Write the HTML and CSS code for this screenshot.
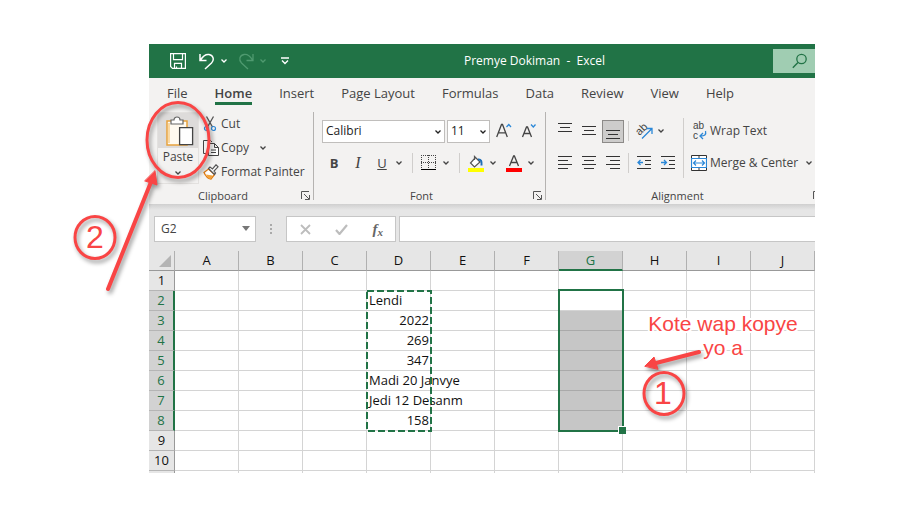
FILE: index.html
```html
<!DOCTYPE html>
<html lang="ht">
<head>
<meta charset="utf-8">
<title>Premye Dokiman - Excel</title>
<link rel="stylesheet" href="styles.css">
</head>
<body>
<svg class="sprite" aria-hidden="true">
  <symbol id="chev" viewBox="0 0 8 6"><path d="M1.500 1.500 4 4 6.500 1.500" fill="none" stroke="currentColor" stroke-width="1.300"/></symbol>
  <symbol id="launch" viewBox="0 0 9 9"><path d="M.5 8V.5H8M3 3l5 5M8.500 4v4.500H4" fill="none" stroke="#555"/></symbol>
</svg>
<main class="app">
  <header class="titlebar">
    <div class="quick">
      <button class="tool save" aria-label="Save"><svg width="16" height="16" viewBox="0 0 16 16"><path d="M.6.6h14.800v14.800H2.500L.6 13.500zM3.500.6v6h9v-6M4.500 15.400v-5h7v5M6.500 15.400v-2" fill="none" stroke="#fff" stroke-width="1.200"/></svg></button>
      <button class="tool undo" aria-label="Undo"><svg width="16" height="17" viewBox="0 0 16 17"><path d="M1 1v6.500h6.500M1.500 7C4 3 7 1 10 1.500c4.500.8 5.500 5.500 2.500 8.500L6 16" fill="none" stroke="#fff" stroke-width="1.500"/></svg><svg class="chev"><use href="#chev"/></svg></button>
      <button class="tool redo" aria-label="Redo"><svg width="16" height="17" viewBox="0 0 16 17"><path d="M15 1v6.500H8.500M14.500 7C12 3 9 1 6 1.500 1.500 2.300.5 7 3.500 10L10 16" fill="none" stroke="currentColor" stroke-width="1.300"/></svg><svg class="chev"><use href="#chev"/></svg></button>
      <button class="tool" aria-label="Customize"><svg width="8" height="8" viewBox="0 0 8 8"><path d="M0 1h8M1 3.500l3 3 3-3" fill="none" stroke="#fff" stroke-width="1.400"/></svg></button>
    </div>
    <h1 class="doc-title">Premye Dokiman&nbsp; -&nbsp; Excel</h1>
    <button class="search" aria-label="Search"><svg width="16" height="16" viewBox="0 0 16 16"><circle cx="9.500" cy="6" r="4.700" fill="none" stroke="#217346" stroke-width="1.300"/><path d="M6 9.500.8 14.800" stroke="#217346" stroke-width="1.400"/></svg></button>
  </header>

  <nav class="tabs">
    <button>File</button><button class="active">Home</button><button>Insert</button><button>Page Layout</button><button>Formulas</button><button>Data</button><button>Review</button><button>View</button><button>Help</button>
  </nav>

  <section class="ribbon">
    <div class="group clipboard">
      <div class="group-body">
        <button class="paste">
          <span class="paste-icon"><svg width="29" height="32" viewBox="0 0 29 32"><path d="M2 5h20v24H2z" fill="#fffaf0" stroke="#e8a33d" stroke-width="1.500"/><path d="M4 27V7" stroke="#f9d9a4" stroke-width="2"/><path d="M6 8V4h3c0-4 6-4 6 0h3v4z" fill="#fff" stroke="#666" stroke-width="1.200"/><path d="M14.600 11.600h13v17h-13z" fill="#fff" stroke="#444" stroke-width="1.300"/></svg></span>
          <span>Paste</span>
          <svg class="chev"><use href="#chev"/></svg>
        </button>
        <div class="clip-list">
          <button><svg width="16" height="16" viewBox="0 0 16 16"><path d="M3.500.5 9.500 11M10.500.5 4.500 11" fill="none" stroke="#555" stroke-width="1.300"/><circle cx="3.500" cy="12.500" r="2" fill="none" stroke="#2b88d8" stroke-width="1.200"/><circle cx="10.500" cy="12.500" r="2" fill="none" stroke="#2b88d8" stroke-width="1.200"/></svg>Cut</button>
          <button><svg width="16" height="16" viewBox="0 0 16 16"><path d="M5 13.500H.5V.5h7L9 2" fill="none" stroke="#444"/><path d="M5.500 3.500h6l4 4v8h-10zM11.500 3.500v4h4M8 10h5M8 12.500h5" fill="#fff" stroke="#444"/></svg>Copy<svg class="chev"><use href="#chev"/></svg></button>
          <button><svg width="16" height="16" viewBox="0 0 16 16"><path d="M1 8.500 5.500 5l6 5.500L8 15c-3-.5-5.500-3-7-6.500z" fill="#fff" stroke="#e07a10" stroke-width="1.300"/><path d="M3 10.500l6.500 1L8 15c-2 0-4-2-5-4.500z" fill="#f2a33c"/><path d="M5.500 4.500 7 3l2.500 2L13 .8l2 2L11 7l1.500 2-1 1.500z" fill="#fff" stroke="#555" stroke-width="1.200"/></svg>Format Painter</button>
        </div>
      </div>
      <div class="group-label">Clipboard<button class="launcher" aria-label="Clipboard options"><svg width="9" height="9"><use href="#launch"/></svg></button></div>
    </div>

    <div class="group font">
      <div class="group-body rows">
        <div class="row">
          <label class="combo family"><select aria-label="Font"><option>Calibri</option></select><svg class="chev"><use href="#chev"/></svg></label>
          <label class="combo size"><select aria-label="Font size"><option>11</option></select><svg class="chev"><use href="#chev"/></svg></label>
          <button class="grow" aria-label="Increase font size"><svg width="16" height="16" viewBox="0 0 16 16"><path d="M.7 14 5.500 1.500h1L11.300 14M2.500 9.800h7" fill="none" stroke="#444" stroke-width="1.300"/><path d="M10.500 4l2.300-2.500L15 4" fill="none" stroke="#2b88d8" stroke-width="1.300"/></svg></button>
          <button class="shrink" aria-label="Decrease font size"><svg width="16" height="16" viewBox="0 0 16 16"><path d="M1.500 14 5.500 4h1l4 10M3 10.500h6" fill="none" stroke="#444" stroke-width="1.300"/><path d="M10 1.500 12.300 4l2.200-2.500" fill="none" stroke="#2b88d8" stroke-width="1.300"/></svg></button>
        </div>
        <div class="row">
          <button class="w24"><b>B</b></button>
          <button class="w24"><i class="serif">I</i></button>
          <button class="w24"><u>U</u></button>
          <button class="drop" aria-label="Underline options"><svg class="chev"><use href="#chev"/></svg></button>
          <span class="sep"></span>
          <button class="w24" aria-label="Borders"><svg width="16" height="16" viewBox="0 0 16 16"><path d="M.5 0v14M14.500 0v14M0 .5h15M7.500 0v14M0 7.500h15" stroke="#444" stroke-dasharray="1 1"/><path d="M0 14.500h15" stroke="#000"/></svg></button>
          <button class="drop" aria-label="Border options"><svg class="chev"><use href="#chev"/></svg></button>
          <span class="sep"></span>
          <button class="w24" aria-label="Fill color"><svg width="16" height="17" viewBox="0 0 16 17"><path d="M7.500 2.500 2.500 8l4 4L12 7 6.500 1.500V5" fill="#fff" stroke="#555" stroke-width="1.200"/><path d="M10 4.500c3-.5 4 2 3.500 6" fill="none" stroke="#1f6fb8" stroke-width="2"/><path d="M0 13h16v4H0z" fill="#ff0"/></svg></button>
          <button class="drop" aria-label="Fill color options"><svg class="chev"><use href="#chev"/></svg></button>
          <button class="w24" aria-label="Font color"><svg width="16" height="17" viewBox="0 0 16 17"><path d="M3.500 11 7.600 1h.8l4.100 10M5 7.500h6" fill="none" stroke="#444" stroke-width="1.300"/><path d="M0 13h16v4H0z" fill="red"/></svg></button>
          <button class="drop" aria-label="Font color options"><svg class="chev"><use href="#chev"/></svg></button>
        </div>
      </div>
      <div class="group-label">Font<button class="launcher" aria-label="Font options"><svg width="9" height="9"><use href="#launch"/></svg></button></div>
    </div>

    <div class="group alignment">
      <div class="group-body">
        <div class="rows align-tools">
          <div class="row">
            <button class="w24" aria-label="Top align"><svg width="14" height="16"><path d="M0 .5h14M2 4.500h10M0 8.500h14" stroke="#333"/></svg></button>
            <button class="w24" aria-label="Middle align"><svg width="14" height="16"><path d="M0 3.500h14M2 7.500h10M0 11.500h14" stroke="#333"/></svg></button>
            <button class="w24 pressed" aria-label="Bottom align"><svg width="14" height="16"><path d="M0 7.500h14M2 11.500h10M0 15.500h14" stroke="#333"/></svg></button>
            <span class="sep"></span>
            <button class="w24" aria-label="Orientation"><svg class="loose" width="17" height="17" viewBox="0 0 17 17"><text x="-1" y="10" transform="rotate(-45 5 6)" font-size="11" fill="#444" class="glyph">ab</text><path d="M6 15.500 15.500 6M10.500 5.500H16V11" fill="none" stroke="#2b88d8" stroke-width="1.300"/></svg></button>
            <button class="drop" aria-label="Orientation options"><svg class="chev"><use href="#chev"/></svg></button>
          </div>
          <div class="row">
            <button class="w24" aria-label="Align left"><svg width="14" height="14"><path d="M0 .5h14M0 4.500h10M0 8.500h14M0 12.500h10" stroke="#333"/></svg></button>
            <button class="w24" aria-label="Center"><svg width="14" height="14"><path d="M0 .5h14M2 4.500h10M0 8.500h14M2 12.500h10" stroke="#333"/></svg></button>
            <button class="w24" aria-label="Align right"><svg width="14" height="14"><path d="M0 .5h14M4 4.500h10M0 8.500h14M4 12.500h10" stroke="#333"/></svg></button>
            <span class="sep"></span>
            <button class="w24" aria-label="Decrease indent"><svg width="14" height="14"><path d="M0 .5h14M8 4.500h6M8 8.500h6M0 12.500h14" stroke="#333"/><path d="M6 6.500H1M3.500 4 1 6.500 3.500 9" fill="none" stroke="#2b88d8" stroke-width="1.300"/></svg></button>
            <button class="w24" aria-label="Increase indent"><svg width="14" height="14"><path d="M0 .5h14M8 4.500h6M8 8.500h6M0 12.500h14" stroke="#333"/><path d="M0 6.500h5M3 4l2.500 2.500L3 9" fill="none" stroke="#2b88d8" stroke-width="1.300"/></svg></button>
          </div>
        </div>
        <div class="rows wrap-tools">
          <button class="row"><svg class="loose" width="16" height="17" viewBox="0 0 16 17"><text x="2" y="6" font-size="10" fill="#444" class="glyph">ab</text><text x="2" y="16" font-size="10" fill="#444" class="glyph">c</text><path d="M14.500 8c1 4-1 5-5 5M12 10l-3 3 3 3" fill="none" stroke="#2b88d8" stroke-width="1.300"/></svg>Wrap Text</button>
          <button class="row"><svg width="16" height="16" viewBox="0 0 16 16"><path d="M.5.5h15v15H.5zM8 0v4M8 12v4" fill="#fff" stroke="#333"/><path d="M.5 3.500h15v9H.5zM3 8h10M5 5.500 2.500 8 5 10.500M11 5.500 13.500 8 11 10.500" fill="#fff" stroke="#2b88d8" stroke-width="1.200"/></svg>Merge &amp; Center<svg class="chev"><use href="#chev"/></svg></button>
        </div>
      </div>
      <div class="group-label">Alignment<button class="launcher" aria-label="Alignment options"><svg width="9" height="9"><use href="#launch"/></svg></button></div>
    </div>
  </section>

  <section class="formula-bar">
    <label class="name-box"><select aria-label="Name box"><option>G2</option></select><svg width="8" height="5"><path d="M0 0h8L4 5z" fill="#777"/></svg></label>
    <svg class="dots" width="3" height="11"><path d="M0 0h2v2H0zM0 4h2v2H0zM0 8h2v2H0z" fill="#aaa"/></svg>
    <div class="fx-box">
      <button aria-label="Cancel"><svg width="11" height="11"><path d="M1 1l9 9M10 1l-9 9" stroke="#bdbdbd" stroke-width="1.800"/></svg></button>
      <button aria-label="Enter"><svg width="13" height="11"><path d="M1 6l3.500 4L12 1" fill="none" stroke="#bdbdbd" stroke-width="2.200"/></svg></button>
      <button aria-label="Insert function" class="fx">f<small>x</small></button>
    </div>
    <input class="formula" type="text" aria-label="Formula">
  </section>

  <table class="sheet">
    <colgroup><col class="rowhead"><col><col><col><col><col><col><col><col><col><col></colgroup>
    <thead><tr><th class="corner"><svg width="12" height="12"><path d="M12 0v12H0z" fill="#b4b4b4"/></svg></th><th>A</th><th>B</th><th>C</th><th>D</th><th>E</th><th>F</th><th class="picked">G</th><th>H</th><th>I</th><th>J</th></tr></thead>
    <tbody>
      <tr><th>1</th><td></td><td></td><td></td><td></td><td></td><td></td><td></td><td></td><td></td><td></td></tr>
      <tr class="on"><th>2</th><td></td><td></td><td></td><td class="anchor">Lendi<svg class="ants"><rect x="1" y="1" width="64" height="140" fill="none" stroke="#217346" stroke-width="2" stroke-dasharray="7 3"/></svg></td><td></td><td></td><td class="anchor"><span class="selection"></span></td><td></td><td></td><td></td></tr>
      <tr class="on"><th>3</th><td></td><td></td><td></td><td class="num">2022</td><td></td><td></td><td class="fill"></td><td></td><td></td><td></td></tr>
      <tr class="on"><th>4</th><td></td><td></td><td></td><td class="num">269</td><td></td><td></td><td class="fill"></td><td></td><td></td><td></td></tr>
      <tr class="on"><th>5</th><td></td><td></td><td></td><td class="num">347</td><td></td><td></td><td class="fill"></td><td></td><td></td><td></td></tr>
      <tr class="on"><th>6</th><td></td><td></td><td></td><td>Madi 20 Janvye</td><td></td><td></td><td class="fill"></td><td></td><td></td><td></td></tr>
      <tr class="on"><th>7</th><td></td><td></td><td></td><td>Jedi 12 Desanm</td><td></td><td></td><td class="fill"></td><td></td><td></td><td></td></tr>
      <tr class="on"><th>8</th><td></td><td></td><td></td><td class="num">158</td><td></td><td></td><td class="fill"></td><td></td><td></td><td></td></tr>
      <tr><th>9</th><td></td><td></td><td></td><td></td><td></td><td></td><td></td><td></td><td></td><td></td></tr>
      <tr><th>10</th><td></td><td></td><td></td><td></td><td></td><td></td><td></td><td></td><td></td><td></td></tr>
      <tr class="stub"><th></th><td></td><td></td><td></td><td></td><td></td><td></td><td></td><td></td><td></td><td></td></tr>
    </tbody>
  </table>
</main>

<svg class="notes" width="911" height="521" viewBox="0 0 911 521">
  <g class="note-text">
    <text class="digit" x="95" y="248" text-anchor="middle">2</text>
    <text class="digit" x="663" y="404" text-anchor="middle">1</text>
    <text x="723" y="331" text-anchor="middle">Kote wap kopye</text>
    <text x="723" y="355" text-anchor="middle">yo a</text>
  </g>
  <g class="marks">
    <ellipse cx="178" cy="140" rx="31" ry="37.500"/>
    <path d="M108 289 151 182"/>
    <path class="head" d="M155 171 157 185 145 181z"/>
    <ellipse cx="95" cy="237.500" rx="20" ry="21"/>
    <path d="M699 352 656 363"/>
    <path class="head" d="M645 366 654 357 658 369z"/>
    <ellipse cx="664" cy="393.500" rx="20" ry="21"/>
  </g>
</svg>
</body>
</html>
```
FILE: styles.css
```css
* { box-sizing: border-box; }
body { margin: 0; background: #fff; font: 12px/16px "Open Sans", "Noto Sans", sans-serif; color: #444; }
button, select, input { font: inherit; color: inherit; border: 0; padding: 0; margin: 0; background: none; border-radius: 0; }
button { display: flex; align-items: center; justify-content: center; white-space: nowrap; }
svg { display: block; flex: none; }
.sprite { position: absolute; width: 0; height: 0; }
.chev { width: 8px; height: 6px; }
.glyph { font-family: "Liberation Sans", sans-serif; }
.loose { overflow: visible; }

.app { margin: 44px 96px 0 149px; overflow: hidden; }

.titlebar { display: grid; grid-template-columns: 1fr auto 1fr; height: 34px; background: #217346; color: #fff; align-items: center; }
.quick { display: flex; align-items: center; padding-left: 21px; }
.tool { gap: 5px; height: 20px; }
.save { margin-right: 13px; }
.undo, .redo { margin-right: 10px; }
.redo { color: #4f9a70; margin-right: 14px; }
.doc-title { margin: 0; padding-left: 105px; font-size: 12px; font-weight: 400; }
.search { justify-self: end; width: 42px; height: 24px; background: #a0cdb2; padding-left: 12px; }

.tabs { display: flex; height: 32px; padding: 5px 0 0 18px; gap: 27px; background: #f3f2f1; font-size: 13px; }
.tabs button { height: 22px; border-bottom: 3px solid transparent; }
.tabs .active { font-weight: 600; border-color: #217346; }

.ribbon { display: flex; height: 94px; background: #f3f2f1; }
.group { position: relative; display: flex; flex-direction: column; flex: none; }
.group:not(:last-child)::after { content: ""; position: absolute; right: 0; top: 2px; bottom: 4px; width: 1px; background: #b5b3b1; }
.clipboard { width: 165px; }
.font { width: 232px; }
.alignment { flex: 1; min-width: 0; }
.group-body { display: flex; height: 76px; }
.group-label { position: relative; display: flex; justify-content: center; height: 18px; line-height: 20px; font-size: 11px; padding-right: 17px; }
.launcher { position: absolute; right: 4px; top: 5px; }
.alignment .group-label { padding-right: 6px; }
.alignment .launcher { right: -7px; }

.paste { flex-direction: column; justify-content: flex-start; width: 42px; height: 72px; margin: 2px 0 0 8px; border: 1px solid #e3e1df; }
.paste-icon { width: 100%; height: 35px; background: #dddbda; display: flex; justify-content: center; padding: 3px 0 0 3px; margin-bottom: 1px; }
.paste .chev { margin-top: 5px; }
.clip-list { padding: 2px 0 0 4px; }
.clip-list button { height: 24px; gap: 2px; }
.clip-list .chev { margin-left: 8px; }

.rows { display: flex; flex-direction: column; gap: 8px; padding-top: 9px; }
.font .rows { padding-left: 8px; }
.row { display: flex; align-items: center; height: 24px; }
.combo { position: relative; height: 23px; border: 1px solid #c0bebc; background: #fff; color: #222; margin-right: 2px; }
.combo select { appearance: none; width: 100%; height: 21px; padding-left: 3px; }
.combo .chev { position: absolute; right: 2px; top: 8px; }
.family { width: 123px; }
.size { width: 43px; margin-right: 6px; }
.grow { margin-right: 9px; }
.w24 { width: 24px; height: 23px; font-size: 13px; }
.serif { font-family: "Liberation Serif", serif; font-size: 16px; }
.drop { width: 14px; height: 23px; padding-right: 4px; }
.sep { width: 1px; height: 20px; margin: 0 4px; background: #d0cecc; }
.pressed { width: 22px; margin: 0 1px; background: #cdcccb; border: 1px solid #8c8a88; }
.align-tools { padding-left: 7px; }
.align-tools .sep { margin: 0 3px; }
.wrap-tools { margin: 8px 0 8px 3px; padding: 1px 0 0 7px; border-left: 1px solid #d0cecc; }
.wrap-tools .row { justify-content: flex-start; gap: 3px; }
.wrap-tools .chev { margin-left: 4px; }

.formula-bar { display: flex; align-items: center; height: 47px; padding: 3px 0 0 5px; background: linear-gradient(#cfcfcf, #e6e6e6 6px); }
.name-box { position: relative; width: 102px; height: 26px; border: 1px solid #c6c6c6; background: #fff; }
.name-box select { appearance: none; width: 100%; height: 24px; padding-left: 6px; }
.name-box svg { position: absolute; right: 5px; top: 9px; }
.dots { margin: 0 13px 0 14px; }
.fx-box { display: flex; align-items: center; justify-content: space-between; width: 110px; height: 26px; padding: 0 12px 0 13px; border: 1px solid #c6c6c6; background: #fff; margin-right: 3px; }
.fx { font: italic 700 15px/20px "Liberation Serif", serif; color: #666; }
.fx small { font-size: 11px; padding-top: 5px; }
.formula { flex: 1; min-width: 0; height: 26px; border: 1px solid #c6c6c6; border-right: 0; background: #fff; }

.sheet { width: 100%; table-layout: fixed; border-collapse: separate; border-spacing: 0; font: 13px/19px "Open Sans", "Noto Sans", sans-serif; color: #111; }
.rowhead { width: 26px; }
.sheet th, .sheet td { height: 20px; padding: 0; border-right: 1px solid #d4d4d4; border-bottom: 1px solid #d4d4d4; }
.sheet th { font-weight: 400; background: #e6e6e6; text-align: center; border-right-color: #999; border-bottom-color: #b5b5b5; }
.sheet thead th { border-color: #999; border-right-color: #b0b0b0; }
.sheet thead .picked { background: #d2d2d2; color: #217346; border-bottom: 2px solid #217346; line-height: 18px; }
.sheet .on th { background: #d2d2d2; color: #217346; border-right: 2px solid #217346; }
.corner svg { margin-left: 10px; }
.sheet td { padding-left: 2px; white-space: nowrap; }
.sheet .num { text-align: right; padding-right: 1px; }
.sheet .fill { background: #c6c6c6; border-bottom-color: #aaa; }
.sheet .stub th, .sheet .stub td { height: 2px; border-bottom: 0; }
.anchor { position: relative; }
.ants { position: absolute; left: -1px; top: -1px; width: 66px; height: 142px; }
.selection { position: absolute; left: -1px; right: -2px; top: -2px; height: 143px; border: 2px solid #217346; }
.selection::after { content: ""; position: absolute; right: -4px; bottom: -4px; width: 7px; height: 7px; background: #217346; border: solid #fff; border-width: 1px 0 0 1px; }

.notes { position: absolute; left: 0; top: 0; pointer-events: none; }
.marks { fill: none; stroke: #f94545; stroke-width: 3; stroke-linecap: round; filter: drop-shadow(2px 3px 2px rgba(0, 0, 0, .4)); }
.marks path { stroke-width: 4; }
.marks .head { fill: #f94545; stroke-width: 1; }
.note-text { font: 21px "Liberation Sans", Arial, sans-serif; fill: #f94545; stroke: #fff; stroke-width: 4px; paint-order: stroke; }
.note-text .digit { font-size: 32px; stroke: none; }
```
